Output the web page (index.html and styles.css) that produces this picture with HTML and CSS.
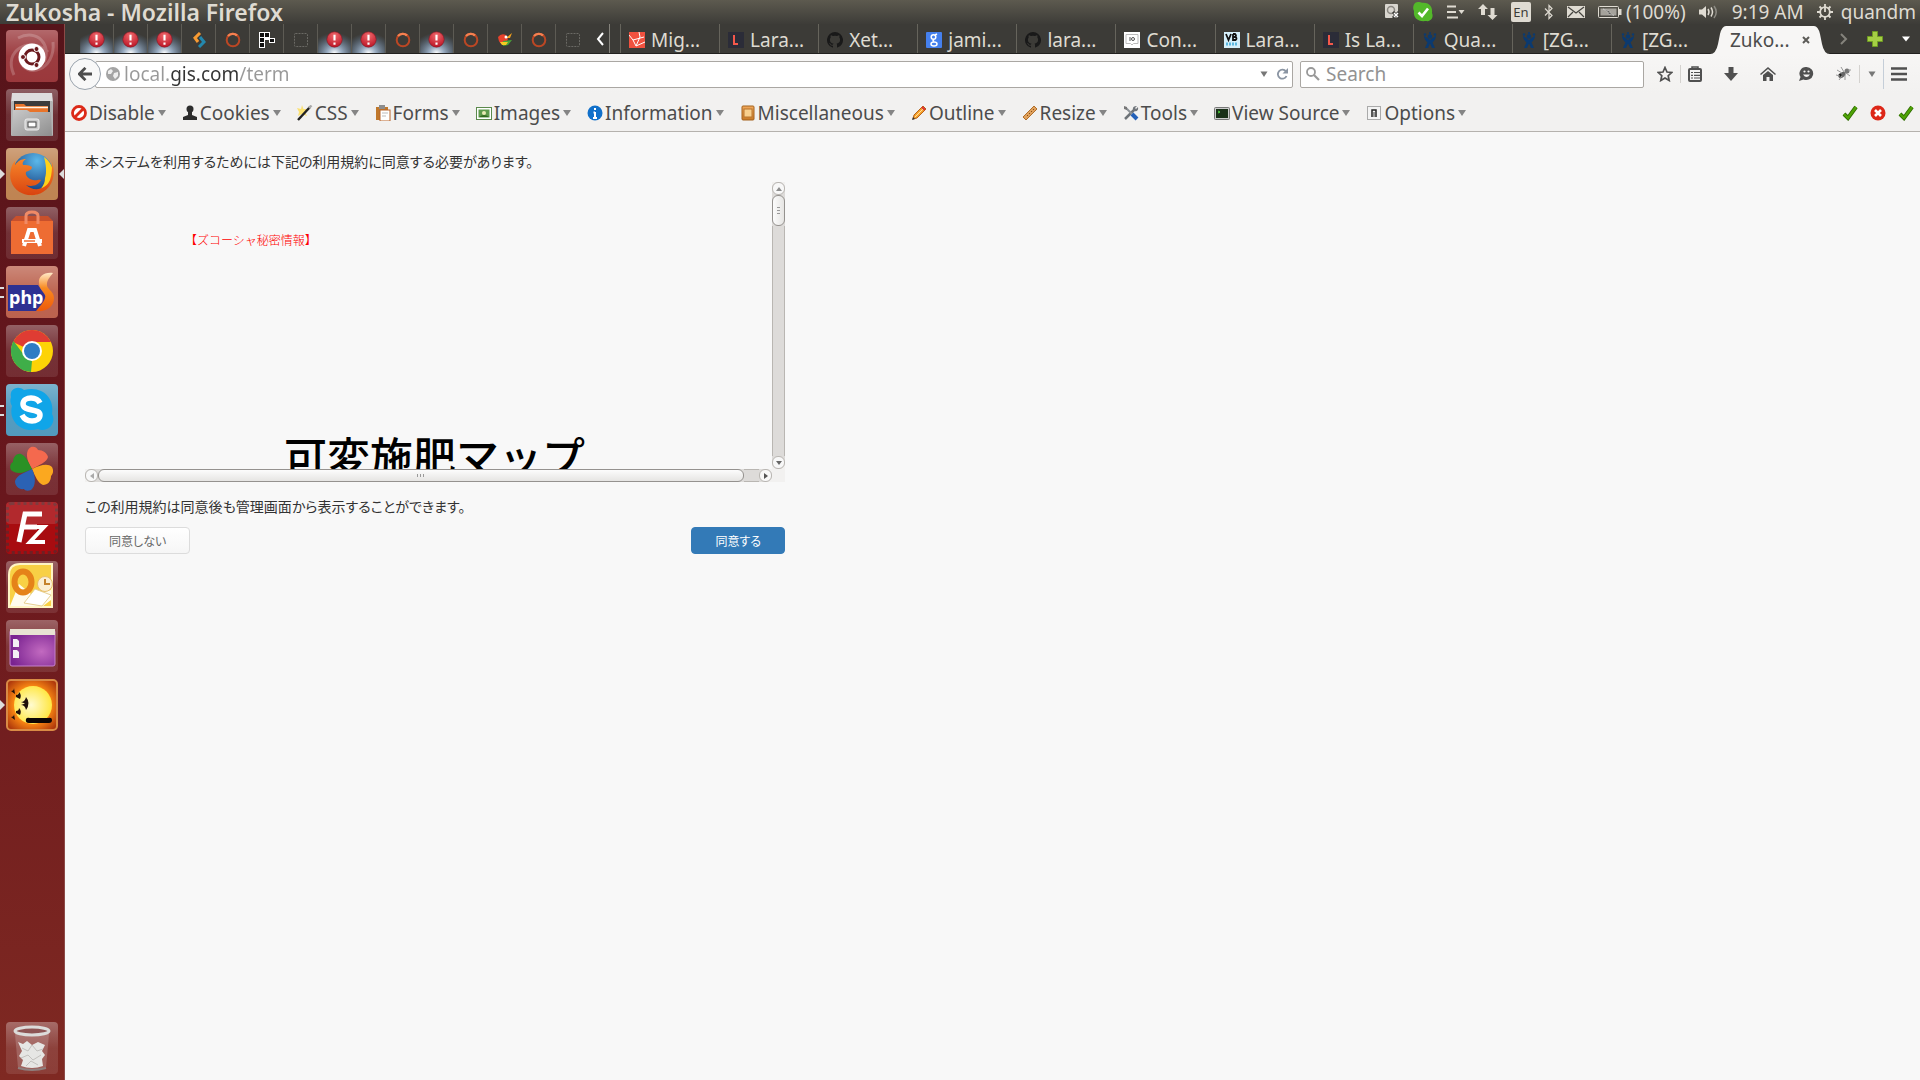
FILE: index.html
```html
<!DOCTYPE html>
<html lang="ja">
<head>
<meta charset="utf-8">
<title>Zukosha</title>
<link rel="stylesheet" href="styles.css">
</head>
<body>
<svg class="defs" aria-hidden="true">
  <defs>
    <linearGradient id="gloss" x1="0" y1="0" x2="0" y2="1"><stop offset="0" stop-color="#fff" stop-opacity=".32"/><stop offset=".5" stop-color="#fff" stop-opacity=".12"/><stop offset="1" stop-color="#fff" stop-opacity=".1"/></linearGradient>
    <radialGradient id="beam" cx=".5" cy="1" r=".75"><stop offset="0" stop-color="#fff"/><stop offset=".3" stop-color="#a9bfd8" stop-opacity=".85"/><stop offset="1" stop-color="#5d7fa8" stop-opacity="0"/></radialGradient>
    <radialGradient id="redball" cx=".5" cy=".25" r=".8"><stop offset="0" stop-color="#f0696c"/><stop offset="1" stop-color="#b80f22"/></radialGradient>
    <linearGradient id="metal" x1="0" y1="0" x2="1" y2="1"><stop offset="0" stop-color="#c9c9c9"/><stop offset="1" stop-color="#8e8e8e"/></linearGradient>
    <linearGradient id="wood" x1="0" y1="0" x2="0" y2="1"><stop offset="0" stop-color="#f1a95d"/><stop offset="1" stop-color="#c97a26"/></linearGradient>
    <linearGradient id="phpS" x1="0" y1="0" x2="0" y2="1"><stop offset="0" stop-color="#ffe9c8"/><stop offset=".4" stop-color="#f98a20"/><stop offset="1" stop-color="#ee5a0a"/></linearGradient>
    <radialGradient id="purple" cx=".7" cy=".6" r=".7"><stop offset="0" stop-color="#c26ac0"/><stop offset="1" stop-color="#7a2391"/></radialGradient>
    <radialGradient id="sun" cx=".45" cy=".5" r=".55"><stop offset="0" stop-color="#fffbd0"/><stop offset="1" stop-color="#ffe640"/></radialGradient>
    <radialGradient id="sunset" cx=".5" cy=".5" r=".7"><stop offset=".5" stop-color="#ff8d14"/><stop offset="1" stop-color="#9c250a"/></radialGradient>
    <radialGradient id="globe" cx=".6" cy=".2" r=".8"><stop offset="0" stop-color="#5bb8ea"/><stop offset="1" stop-color="#143a7c"/></radialGradient>
    <linearGradient id="fox" x1="0" y1="0" x2="0" y2="1"><stop offset="0" stop-color="#f7862a"/><stop offset="1" stop-color="#d9430f"/></linearGradient>
    <symbol id="alert" viewBox="0 0 34 28"><rect width="34" height="28" fill="url(#beam)"/><circle cx="17" cy="14" r="8" fill="url(#redball)" stroke="#7d1620" stroke-width=".6"/><path d="M17 9v6M17 17v2.4" stroke="#fff" stroke-width="2.2"/></symbol>
    <symbol id="ring" viewBox="0 0 16 16"><circle cx="8" cy="8" r="6.3" fill="none" stroke="#bb4724" stroke-width="2"/><path d="M3 4a6.3 6.3 0 0 1 9-.5" fill="none" stroke="#f58151" stroke-width="2.4"/></symbol>
    <symbol id="blank" viewBox="0 0 16 16"><rect x="1.5" y="1.5" width="13" height="13" rx="1" fill="none" stroke="#6b6a65" stroke-dasharray="2 1"/></symbol>
    <symbol id="elle" viewBox="0 0 16 16"><rect width="16" height="16" fill="#2b2c38"/><path d="M6 3v9h4" fill="none" stroke="#f4584b" stroke-width="2"/></symbol>
    <symbol id="octo" viewBox="0 0 16 16"><path fill="#191919" d="M8 0a8 8 0 0 0-2.5 15.600c.4.100.5-.2.500-.4v-1.500c-2.200.500-2.700-.9-2.700-.9-.4-.9-.9-1.200-.9-1.200-.7-.5.100-.5.100-.5.800.100 1.200.8 1.200.8.700 1.200 1.900.9 2.300.7.100-.5.300-.9.500-1.100-1.800-.2-3.600-.9-3.600-4 0-.9.300-1.600.8-2.100-.1-.3-.4-1.100.100-2.200 0 0 .7-.2 2.200.8a7.500 7.500 0 0 1 4 0c1.500-1 2.200-.8 2.200-.8.500 1.100.200 1.900.100 2.200.5.600.8 1.300.8 2.100 0 3.100-1.900 3.800-3.600 4 .3.300.500.800.500 1.500v2.200c0 .2.100.5.500.4A8 8 0 0 0 8 0z"/></symbol>
    <symbol id="jira" viewBox="0 0 16 16"><g fill="#0b3a70"><circle cx="8" cy="4.500" r="2.200"/><circle cx="3" cy="2.500" r="1.200"/><circle cx="13" cy="2.500" r="1.200"/><circle cx="8" cy="1" r="1"/><path d="M2 4l2 1 4 3 4-3 2-1c0 3-2 5-3.500 6.500L13 16h-3L8 11.500 6 16H3l2.500-5.500C4 9 2 7 2 4z"/></g></symbol>
    <symbol id="check" viewBox="0 0 16 16"><path d="M2 9l4 4 8-11" fill="none" stroke="#2f6b00" stroke-width="4"/><path d="M2 9l4 4 8-11" fill="none" stroke="#4fa306" stroke-width="2.400"/></symbol>
  </defs>
</svg>

<header class="panel">
  <h1 class="window-title">Zukosha - Mozilla Firefox</h1>
  <div class="indicators">
    <svg class="i14" viewBox="0 0 14 16"><rect width="13" height="14" rx="1" fill="#d9d6cf"/><circle cx="6" cy="6" r="3.500" fill="none" stroke="#8b8882" stroke-width="1.500"/><path d="M8 8l6 6M14 8l-6 6" stroke="#3c3b37" stroke-width="3"/><path d="M9 9l4 4M13 9l-4 4" stroke="#fff" stroke-width="1.500"/></svg>
    <svg class="i22" viewBox="0 0 22 22"><path d="M6 1c2 0 3 .5 4 .8C17 1 21 6 20 12c2 4-1 9-6 8C6 21 1 17 2 10 0 6 2 1 6 1z" fill="#53b82a"/><path d="M6.500 11.500l3.500 3.500 6-7.500" fill="none" stroke="#fff" stroke-width="2.600"/></svg>
    <svg class="i18" viewBox="0 0 18 16"><path d="M0 2.500h9M0 8h9M0 13.500h11" stroke="#dfdbd2" stroke-width="2.200"/><path d="M11.500 6h6l-3 4z" fill="#dfdbd2"/></svg>
    <svg class="i20" viewBox="0 0 20 16"><path d="M5 0l5 5H7v6H3V5H0zM14.500 16l-5-5h3V4h4v7h3z" fill="#dfdbd2"/></svg>
    <span class="lang">En</span>
    <svg class="i10" viewBox="0 0 10 16"><path d="M1 4.500l7 7L5 14.500v-13l3 3-7 7" fill="none" stroke="#dfdbd2" stroke-width="1.200"/></svg>
    <svg class="i18" viewBox="0 0 18 14"><rect y="1" width="18" height="12" fill="#dfdbd2"/><path d="M1 2l8 6 8-6M1 12l5-5M17 12l-5-5" fill="none" stroke="#45443f" stroke-width="1.200"/></svg>
    <span class="battery"><svg class="i24" viewBox="0 0 24 12"><rect x=".5" y=".5" width="20" height="11" rx="1" fill="none" stroke="#dfdbd2"/><rect x="2.500" y="2.500" width="16" height="7" fill="#a5a29b"/><rect x="21" y="3" width="2.500" height="6" fill="#dfdbd2"/><path d="M5 3l7 2.500-.5 1 4.500 3-6-2 .5-1.200z" fill="#3c3b37" stroke="#eee" stroke-width=".4"/></svg>(100%)</span>
    <svg class="i20" viewBox="0 0 20 16"><path d="M0 5.500h3L7 2v12L3 10.500H0z" fill="#dfdbd2"/><path d="M9 5q2 3 0 6M12 3.500q3 4.500 0 9" fill="none" stroke="#dfdbd2" stroke-width="1.500"/><path d="M15 2q4.500 6 0 12" fill="none" stroke="#8c8a83" stroke-width="1.500"/></svg>
    <time class="clock">9:19 AM</time>
    <span class="user"><svg class="i16" viewBox="0 0 16 16"><circle cx="8" cy="8" r="4.800" fill="none" stroke="#dfdbd2" stroke-width="1.800"/><path d="M8 0v8M8 16v-4M0 8h4M16 8h-4M2.500 2.500L5 5M13.500 2.500L11 5M2.500 13.500L5 11M13.500 13.500L11 11" stroke="#dfdbd2" stroke-width="1.800"/></svg>quandm</span>
  </div>
</header>

<div class="desktop">
  <nav class="launcher" aria-label="Launcher">
    <button class="app" aria-label="Dash"><svg viewBox="0 0 52 52"><rect width="52" height="52" rx="4" fill="#8f2226"/><path d="M8 45C-4 20 25 5 42 22M47 12C50 40 20 50 14 30M12 8c20-10 34 8 26 24" fill="none" stroke="#fff" stroke-opacity=".2" stroke-width="3"/><rect width="52" height="52" rx="4" fill="url(#gloss)"/><circle cx="26" cy="27" r="13.500" fill="#fff"/><circle cx="26" cy="27" r="7" fill="none" stroke="#6a1a1e" stroke-width="3"/><g fill="#6a1a1e" stroke="#fff"><circle cx="17" cy="27" r="2.500"/><circle cx="30.500" cy="19" r="2.500"/><circle cx="30.500" cy="35" r="2.500"/></g></svg></button>
    <button class="app" aria-label="Files"><svg viewBox="0 0 52 52"><rect width="52" height="52" rx="4" fill="url(#gloss)"/><path d="M6 4h40l1 9H5z" fill="#ddd"/><rect x="5" y="12" width="42" height="35" rx="1" fill="#b4b4b4"/><rect x="8" y="12" width="36" height="13" fill="#3b3b3b"/><path d="M9 15h9l2 2h22v8H9z" fill="#e8742a"/><path d="M10 18.500h32" stroke="#fff3e4" stroke-width="1.500"/><path d="M7 21h14l3 2h21l1 24H6z" fill="url(#metal)"/><rect x="19" y="30" width="14" height="11" rx="2" fill="#c9c9c9" stroke="#eee"/><rect x="22" y="33" width="8" height="5" fill="#fff" stroke="#444"/></svg></button>
    <button class="app running focused" aria-label="Firefox"><svg viewBox="0 0 52 52"><rect width="52" height="52" rx="4" fill="#b8763f"/><rect width="52" height="52" rx="4" fill="url(#gloss)"/><circle cx="27" cy="25" r="20" fill="url(#globe)"/><path d="M38 9c9 6 12 18 6 27-5 8-14 12-22 11 12-3 17-9 17-17 2-6 1-14-1-21z" fill="#ffd21a"/><path d="M46 14c4 12 1 24-9 30-12 7-28 2-32-11-2-7 0-16 4-20v4c3-4 6-6 11-6-3 2-4 4-3 6 3 0 6 0 9 2 0 3-4 4-6 5-1 3 2 7 7 8 4 1 6-1 8 0-3 6-10 7-15 5 7 7 20 5 24-5 2-6 2-12 2-18z" fill="url(#fox)"/></svg></button>
    <button class="app" aria-label="Software Center"><svg viewBox="0 0 52 52"><rect width="52" height="52" rx="4" fill="url(#gloss)"/><path d="M5 14l5-5h32l5 5z" fill="#c8502c"/><rect x="5" y="14" width="42" height="33" fill="#ee6c33"/><path d="M20 17V9q0-4 6-4t6 4v8" fill="none" stroke="#f08a66" stroke-width="3"/><path d="M18 39l5-16h6l5 16" fill="none" stroke="#fff" stroke-width="4"/><path d="M16 34h20" stroke="#fff" stroke-width="4"/><path d="M18 34h11" stroke="#ee6c33" stroke-width="1.500"/></svg></button>
    <button class="app windows" aria-label="PhpStorm"><svg viewBox="0 0 52 52"><rect width="52" height="52" rx="4" fill="#b4513b"/><rect width="52" height="52" rx="4" fill="url(#gloss)"/><path d="M2 19h30l9 13-7 13H2z" fill="#2d3192"/><path d="M47 7c-9-1-15 3-14 11 1 7 8 9 6 14-1 4-5 8-9 13 10 1 18-4 18-13 0-7-8-9-7-14 0-4 3-7 6-11z" fill="url(#phpS)"/><text x="3" y="38" class="php-mark">php</text></svg></button>
    <button class="app" aria-label="Chrome"><svg viewBox="0 0 52 52"><rect width="52" height="52" rx="4" fill="url(#gloss)"/><circle cx="26" cy="26" r="21" fill="#fdd306"/><path d="M26 26L7 17A21 21 0 0 1 45 17H26z" fill="#df3c33"/><path d="M26 36l-1 11A21 21 0 0 1 7.500 16L18 30z" fill="#3fae49"/><circle cx="26" cy="26" r="10" fill="#fff"/><circle cx="26" cy="26" r="8" fill="#2f7cc4"/></svg></button>
    <button class="app windows" aria-label="Skype"><svg viewBox="0 0 52 52"><rect width="52" height="52" rx="4" fill="#3f8fb7"/><rect width="52" height="52" rx="4" fill="url(#gloss)"/><path d="M5 13C3 5 12 1 18 6c18-5 31 8 28 24 5 9-4 19-14 15C16 50 2 37 6 22c-2-3-2-6-1-9z" fill="#10a5e8"/><path d="M34 19c-2-4-6-5-9-5-4 0-8 2-8 6 0 8 17 4 17 11 0 4-4 6-8 6-4 0-8-2-10-6" fill="none" stroke="#fff" stroke-width="5.500"/></svg></button>
    <button class="app" aria-label="Clover"><svg viewBox="0 0 52 52"><rect width="52" height="52" rx="4" fill="url(#gloss)"/><path d="M26 26C20 17 19 7 25 4c4-1 6 1 7 3 5 0 9 3 10 7-1 5-9 8-16 12z" fill="#f4694e"/><path d="M26 26C19 30 10 32 5 27c-2-4 0-7 2-8 0-4 3-9 8-8 5 2 8 9 11 15z" fill="#2a9125"/><path d="M26 26c8-4 16-6 20-2 2 4 1 7-1 9 0 5-3 9-8 9-5-2-8-9-11-16z" fill="#fba81f"/><path d="M26 26c4 8 4 17-1 21-3 1-6 1-7-1-5 1-9-3-9-8 2-6 9-8 17-12z" fill="#2b62b4"/></svg></button>
    <button class="app" aria-label="FileZilla"><svg viewBox="0 0 52 52"><rect width="52" height="52" rx="4" fill="#a80c10"/><rect x="1.500" y="1.500" width="49" height="49" rx="4" fill="none" stroke="#6e2024" stroke-width="3" stroke-dasharray="3 3"/><path d="M13 40l6-28h17M16 25h15" fill="none" stroke="#fff" stroke-width="5"/><path d="M24 25h14L24 40h15" fill="none" stroke="#fff" stroke-width="4"/><rect width="52" height="22" rx="4" fill="#fff" opacity=".12"/></svg></button>
    <button class="app" aria-label="Outlook"><svg viewBox="0 0 52 52"><rect width="52" height="52" rx="4" fill="url(#gloss)"/><path d="M3 46V14Q3 3 14 3h32v43z" fill="#f8d045" stroke="#fff4c4" stroke-width="2"/><path d="M4 45l9-22 12 10 20-4v10l-8 6z" fill="#fffbed"/><path d="M18 42l11-14 16 6-9 11z" fill="#fff" stroke="#e6cf90"/><ellipse cx="17" cy="21" rx="8.500" ry="10.500" fill="none" stroke="#e58219" stroke-width="6"/><circle cx="39" cy="23" r="7.500" fill="#fbeed2" stroke="#e9bf6c"/><path d="M39 18v5h5" fill="none" stroke="#c5822b" stroke-width="2"/></svg></button>
    <button class="app" aria-label="Workspace"><svg viewBox="0 0 52 52"><rect width="52" height="52" rx="4" fill="url(#gloss)"/><rect x="4" y="10" width="45" height="36" rx="2" fill="url(#purple)" stroke="#c681cc"/><rect x="4" y="9" width="45" height="6" fill="#e8e3d3"/><path d="M7 19h4l2 2v6H7zM7 30h4l2 2v6H7z" fill="#f3eef4"/></svg></button>
    <button class="app running" aria-label="Sunset"><svg viewBox="0 0 52 52"><rect x="1" y="1" width="50" height="50" rx="4" fill="url(#sunset)" stroke="#d98b45" stroke-width="2"/><circle cx="27" cy="26" r="19" fill="url(#sun)"/><path d="M15 23q4 0 5-5 5 6 0 13-1-5-5-5l4-1.500zM10 16q3 0 3-3 3 3 1 7l-4-2zM10 32q3 0 3-3 3 3 1 7l-4-2zM5 12q3 0 3-3l1 6zM5 38q3 0 3-3l1 6z" fill="#20100a"/><path d="M20 40q1-2 4-1h18q4-1 4 2t-3 3H23q-4 0-3-4z" fill="#0c0605"/></svg></button>
    <button class="app trash" aria-label="Trash"><svg viewBox="0 0 52 52"><rect width="52" height="52" rx="4" fill="url(#gloss)"/><path d="M9 12h34l-3 34q-14 4-28 0z" fill="#fff" opacity=".18"/><path d="M12 20l5 2 4-3 5 4 6-3 7 3-3 6 3 4-3 4 1 7q-11 4-22 0l2-6-4-4 3-5z" fill="#e6e6e4"/><path d="M16 26l6 3 4-6 5 6 6-2M15 36l7-3 5 5 8-5M20 44l5-5 7 4" fill="none" stroke="#c2c0bd"/><path d="M12 46q14 4 28 0" fill="none" stroke="#8f7f7e" stroke-width="2"/><ellipse cx="26" cy="9" rx="17" ry="4" fill="#8e5554" stroke="#dcdcda" stroke-width="3"/></svg></button>
  </nav>

  <section class="browser">
    <div class="tabstrip">
      <div class="pinned">
        <button class="pin wide" aria-label="Alert"><svg><use href="#alert"/></svg></button>
        <button class="pin wide" aria-label="Alert"><svg><use href="#alert"/></svg></button>
        <button class="pin wide" aria-label="Alert"><svg><use href="#alert"/></svg></button>
        <button class="pin" aria-label="Arrows"><svg viewBox="0 0 16 16"><path d="M9 1L4 6l3 4" fill="none" stroke="#f79a32" stroke-width="3"/><path d="M9 5l4 5-5 5" fill="none" stroke="#2488ad" stroke-width="3"/></svg></button>
        <button class="pin" aria-label="Ring"><svg><use href="#ring"/></svg></button>
        <button class="pin" aria-label="Blocks"><svg viewBox="0 0 16 16"><path d="M0 0h11v6h5v5h-6V8H6v8H0z" fill="#fff"/><path d="M1 1h4v4H1zM6 1h4v4H6zM1 6h4v4H1zM1 11h4v4H1zM11 7h4v3h-4z" fill="#111"/></svg></button>
        <button class="pin" aria-label="Blank"><svg><use href="#blank"/></svg></button>
        <button class="pin wide" aria-label="Alert"><svg><use href="#alert"/></svg></button>
        <button class="pin wide" aria-label="Alert"><svg><use href="#alert"/></svg></button>
        <button class="pin" aria-label="Ring"><svg><use href="#ring"/></svg></button>
        <button class="pin wide" aria-label="Alert"><svg><use href="#alert"/></svg></button>
        <button class="pin" aria-label="Ring"><svg><use href="#ring"/></svg></button>
        <button class="pin" aria-label="Bird"><svg viewBox="0 0 16 16"><path d="M1 5q3-4 8-2l2 4-3 6Q2 13 1 5z" fill="#e8422c"/><path d="M6 9l9-1-4 5-5 1z" fill="#4aa53a"/><path d="M3 10h8l-2 3H5z" fill="#f6c924"/><path d="M9 6l6-5-2 5z" fill="#f5a21c"/><circle cx="9" cy="5" r="1.500" fill="#fff"/></svg></button>
        <button class="pin" aria-label="Ring"><svg><use href="#ring"/></svg></button>
        <button class="pin last" aria-label="Blank"><svg><use href="#blank"/></svg></button>
      </div>
      <button class="scroll" aria-label="Scroll tabs left"><svg viewBox="0 0 8 14"><path d="M7 1L2 7l5 6" fill="none" stroke="#fff" stroke-width="2"/></svg></button>
      <div class="tabs">
        <button class="tab"><svg viewBox="0 0 16 16"><rect width="16" height="16" fill="#f0513f"/><path d="M0 3l4 5 11-3M4 8l3 6 9-4M7 14l4-9-1-5" fill="none" stroke="#fff"/></svg>Mig...</button>
        <button class="tab"><svg><use href="#elle"/></svg>Lara...</button>
        <button class="tab"><svg><use href="#octo"/></svg>Xet...</button>
        <button class="tab"><svg viewBox="0 0 16 16"><rect width="16" height="16" rx="1" fill="#4580ee"/><g fill="none" stroke="#fff" stroke-width="1.500"><circle cx="7.500" cy="5" r="2.300"/><ellipse cx="8" cy="12" rx="3" ry="2"/><path d="M9 3l2-1M8 7.500q-2 1 0 2"/></g></svg>jami...</button>
        <button class="tab"><svg><use href="#octo"/></svg>lara...</button>
        <button class="tab"><svg viewBox="0 0 16 16"><rect width="16" height="16" fill="#fff"/><path d="M2 2.500h12v9H9.500L8 13l-1.500-1.500H2z" fill="none" stroke="#bbb"/><path d="M6 5v4" stroke="#555"/><circle cx="9" cy="7" r="1.500" fill="none" stroke="#555"/></svg>Con...</button>
        <button class="tab"><svg viewBox="0 0 16 16"><rect width="16" height="16" fill="#d5effa"/><path d="M2 2l2.500 6L7 2M9 2v6h2.500q2-1.500 0-3H9h2q2-1 0-3H9" fill="none" stroke="#111" stroke-width="1.800"/><path d="M2 12h12" stroke="#5cb8e0" stroke-width="3" stroke-dasharray="2 1"/></svg>Lara...</button>
        <button class="tab"><svg><use href="#elle"/></svg>Is La...</button>
        <button class="tab"><svg><use href="#jira"/></svg>Qua...</button>
        <button class="tab"><svg><use href="#jira"/></svg>[ZG...</button>
        <button class="tab"><svg><use href="#jira"/></svg>[ZG...</button>
      </div>
      <button class="tab-active"><svg class="curve" viewBox="0 0 16 28"><path d="M0 28Q6 28 8 18L10 8Q12 0 16 0V28z" fill="#f7f6f5"/></svg><span class="active-label">Zuko...<svg class="close" viewBox="0 0 8 8"><path d="M1 1l6 6M7 1L1 7" stroke="#5c5b57" stroke-width="2"/></svg></span><svg class="curve" viewBox="0 0 16 28"><path d="M16 28Q10 28 8 18L6 8Q4 0 0 0V28z" fill="#f7f6f5"/></svg></button>
      <div class="tab-tools">
        <button aria-label="Scroll tabs right"><svg class="i8" viewBox="0 0 8 12"><path d="M1 1l5 5-5 5" fill="none" stroke="#85837c" stroke-width="2"/></svg></button>
        <button aria-label="New tab"><svg class="i16" viewBox="0 0 16 16"><path d="M5.500.5h5v5h5v5h-5v5h-5v-5h-5v-5h5z" fill="#a5cf45" stroke="#6f9c22"/></svg></button>
        <button aria-label="List all tabs"><svg class="i8" viewBox="0 0 8 5"><path d="M0 0h8L4 5z" fill="#fff"/></svg></button>
      </div>
    </div>

    <div class="navbar">
      <button class="back" aria-label="Back"><svg viewBox="0 0 16 16"><path d="M8.500 1L1.500 8l7 7M2 8h14" fill="none" stroke="#4d4d4d" stroke-width="3.200"/></svg></button>
      <div class="field url">
        <svg class="i14" viewBox="0 0 14 14"><circle cx="7" cy="7" r="7" fill="#a4a4a4"/><path d="M2 4l3-2 2 2-2 3-3 0zM8 6l4-1v4l-3 3-2-3z" fill="#eee"/></svg>
        <input class="address" type="text" value="local.gis.com/term" aria-label="Address">
        <svg class="i8" viewBox="0 0 8 6"><path d="M.5.500h7L4 6z" fill="#777"/></svg>
        <button aria-label="Reload"><svg class="i12" viewBox="0 0 12 12"><path d="M10 3.500A4.500 4.500 0 1 0 10.500 8" fill="none" stroke="#8b95a3" stroke-width="1.800"/><path d="M12 0v5.500H6.500z" fill="#8b95a3"/></svg></button>
      </div>
      <div class="field search">
        <svg class="i14" viewBox="0 0 14 14"><circle cx="5" cy="5" r="4" fill="none" stroke="#999" stroke-width="1.800"/><path d="M8 8l5 5" stroke="#999" stroke-width="2.200"/></svg>
        <input type="text" placeholder="Search" aria-label="Search">
      </div>
      <div class="nav-tools">
        <button aria-label="Bookmark"><svg class="i16" viewBox="0 0 16 16"><path d="M8 1.500l2 4.500 4.800.5-3.600 3.200 1 4.800L8 12l-4.200 2.500 1-4.800L1.200 6.500 6 6z" fill="none" stroke="#505050" stroke-width="1.700"/></svg></button>
        <i class="rule"></i>
        <div class="shortcuts">
          <button aria-label="Reading list"><svg class="i14" viewBox="0 0 14 16"><rect x="1" y="3" width="12" height="12" rx="1" fill="none" stroke="#505050" stroke-width="2"/><path d="M4 2.500V1h6v1.500" fill="none" stroke="#505050" stroke-width="1.500"/><path d="M3 6.500h2M6 6.500h6M3 9.300h2M6 9.300h6M3 12h2M6 12h6" stroke="#505050" stroke-width="1.200"/></svg></button>
          <button aria-label="Downloads"><svg class="i14" viewBox="0 0 14 14"><path d="M4.500 0h5v6H14l-7 8-7-8h4.500z" fill="#505050"/></svg></button>
          <button aria-label="Home"><svg class="i16" viewBox="0 0 16 16"><path d="M0 8l8-7 8 7-1 1-7-6-7 6zM3 9l5-4 5 4v6h-3.500v-4h-3v4H3z" fill="#505050"/></svg></button>
          <button aria-label="Chat"><svg class="i16" viewBox="0 0 16 16"><path d="M8.500 1a7 6.500 0 1 1-3 12.500L1 15l1.500-4A6.500 6.500 0 0 1 8.500 1z" fill="#505050"/><path d="M5 8.500q3.500 5 7 0z" fill="#f4f3f2"/><circle cx="6.500" cy="5.500" r="1.100" fill="#f4f3f2"/><circle cx="10.500" cy="5.500" r="1.100" fill="#f4f3f2"/></svg></button>
          <button aria-label="Firebug"><svg class="i16" viewBox="0 0 16 16"><ellipse cx="6" cy="9" rx="4" ry="2.500" transform="rotate(-35 6 9)" fill="#666"/><circle cx="11" cy="5" r="2.500" fill="#777"/><circle cx="4" cy="9" r="1.500" fill="#222"/><path d="M1 4l5 3M5 1l3 5M3 14l3-4M9 14l0-5M14 10l-4-3M15 4l-3 0M0 9l4 1" stroke="#999" fill="none"/></svg></button>
        </div>
        <i class="rule"></i>
        <button aria-label="More"><svg class="i8" viewBox="0 0 8 6"><path d="M.5.500h7L4 6z" fill="#777"/></svg></button>
        <i class="rule tall"></i>
        <button aria-label="Menu"><svg class="i16" viewBox="0 0 16 14"><path d="M0 1.500h16M0 7h16M0 12.500h16" stroke="#505050" stroke-width="2.600"/></svg></button>
      </div>
    </div>

    <div class="devbar">
      <button class="dev"><svg viewBox="0 0 16 16"><circle cx="8" cy="8" r="6.500" fill="#fff" stroke="#dc2a18" stroke-width="2.800"/><path d="M3.500 12.500l9-9" stroke="#dc2a18" stroke-width="2.800"/></svg>Disable</button>
      <button class="dev"><svg viewBox="0 0 16 16"><circle cx="8" cy="4" r="3.500" fill="#2c2c2c"/><path d="M6 6h4v4l5 2v3H1v-3l5-2z" fill="#2c2c2c"/></svg>Cookies</button>
      <button class="dev"><svg viewBox="0 0 16 16"><path d="M5 0l1.500 4L11 4 8 7l2 4-5-2-4 2 1-4-2-4 4 1z" fill="#fbe173"/><path d="M1 15L13 2" stroke="#222" stroke-width="2.400"/><path d="M12 3l2.500-2.500" stroke="#aaa" stroke-width="2.400"/></svg>CSS</button>
      <button class="dev"><svg viewBox="0 0 16 16"><rect x="1" y="2" width="12" height="13" fill="#c0782b"/><rect x="5" y="5" width="10" height="11" fill="#fff" stroke="#b8652a"/><rect x="4" width="6" height="4" fill="#8d8d8d"/><path d="M7 8h6M7 11h4" stroke="#bbb"/></svg>Forms</button>
      <button class="dev"><svg viewBox="0 0 16 16"><rect x=".5" y="2.500" width="15" height="12" fill="#fff" stroke="#5c8a4c"/><rect x="2.500" y="4.500" width="11" height="8" fill="#5f9a4c"/><circle cx="8" cy="8" r="2" fill="#e9eab4"/><path d="M3 12q5-4 10 0z" fill="#33691f"/></svg>Images</button>
      <button class="dev"><svg viewBox="0 0 16 16"><circle cx="8" cy="8" r="7.500" fill="#1170ca"/><path d="M8 3v2M8 7v6M6 13h4M6.500 7.500H8" stroke="#fff" stroke-width="2"/></svg>Information</button>
      <button class="dev"><svg viewBox="0 0 16 16"><rect x="2" y="1" width="12" height="14" rx="1" fill="url(#wood)" stroke="#a3621c"/><rect x="4" y="4" width="8" height="8" fill="#f8cf8c" stroke="#b8752c"/></svg>Miscellaneous</button>
      <button class="dev"><svg viewBox="0 0 16 16"><path d="M2 14l1-4 9-9 3 3-9 9z" fill="#f6a12d" stroke="#b5641a"/><path d="M4 12L13 3" stroke="#ffe3a0"/><path d="M11 2l3 3" stroke="#d33" stroke-width="2"/><path d="M1 15l1-3 2 2z" fill="#333"/></svg>Outline</button>
      <button class="dev"><svg viewBox="0 0 16 16"><path d="M1 12L12 1l3 3L4 15z" fill="#e0a15d" stroke="#b06f2b"/><path d="M5 10l1 1M7 8l1 1M9 6l1 1M11 4l1 1" stroke="#8c5012"/></svg>Resize</button>
      <button class="dev"><svg viewBox="0 0 16 16"><path d="M2 14L12 4" stroke="#6e7378" stroke-width="2.500"/><path d="M10 5q-1-4 4-4l-2 2 1 1 2-2q1 5-4 4z" fill="#70757a"/><path d="M3 3l6 6" stroke="#8c9297" stroke-width="2"/><path d="M9 9l5 5" stroke="#2461b8" stroke-width="4"/><path d="M1 1l3 1 0 3-3-1z" fill="#777"/></svg>Tools</button>
      <button class="dev"><svg viewBox="0 0 16 16"><rect x=".5" y="2.500" width="15" height="12" rx="1" fill="#ccc" stroke="#777"/><rect x="2" y="4" width="12" height="9" fill="#193018"/><path d="M4 6l2 1-2 1" stroke="#4fd43c" fill="none"/></svg>View Source</button>
      <button class="dev"><svg viewBox="0 0 16 16"><rect x="1.500" y="1.500" width="13" height="13" fill="#f3f3f3" stroke="#aaa"/><path d="M6 12V5h4v7" fill="none" stroke="#222" stroke-width="1.500"/><rect x="7" y="7" width="2" height="5" fill="#999"/></svg>Options</button>
      <div class="status">
        <svg><use href="#check"/></svg>
        <svg viewBox="0 0 16 16"><circle cx="8" cy="8" r="7.500" fill="#dd2718"/><path d="M5 5l6 6M11 5l-6 6" stroke="#fff" stroke-width="2.600"/></svg>
        <svg><use href="#check"/></svg>
      </div>
    </div>

    <main class="page">
      <div class="terms">
        <p>本システムを利用するためには下記の利用規約に同意する必要があります。</p>
        <div class="frame">
          <article class="doc">
            <p class="secret">【ズコーシャ秘密情報】</p>
            <h2>可変施肥マップ</h2>
          </article>
          <div class="vbar"><i class="step up"></i><i class="thumb"></i><i class="track"></i><i class="step down"></i></div>
          <div class="hbar"><i class="step left"></i><i class="thumb"></i><i class="track"></i><i class="step right"></i></div>
        </div>
        <p>この利用規約は同意後も管理画面から表示することができます。</p>
        <div class="actions">
          <button class="btn">同意しない</button>
          <button class="btn primary">同意する</button>
        </div>
      </div>
    </main>
  </section>
</div>
</body>
</html>
```
FILE: styles.css
```css
* { box-sizing: border-box; }

body {
  margin: 0;
  min-height: 100vh;
  display: flex;
  flex-direction: column;
  background: #f8f8f8;
  color: #4c4c4c;
  font: 19px/24px "Noto Sans", "Noto Sans CJK JP", sans-serif;
}

button, input {
  margin: 0;
  padding: 0;
  border: 0;
  background: none;
  color: inherit;
  font: inherit;
}

button { display: flex; align-items: center; }
svg { display: block; flex: none; }
p, h1, h2 { margin: 0; }

.defs { position: absolute; width: 0; height: 0; }
.i8 { width: 8px; height: 12px; }
.i10 { width: 10px; height: 16px; }
.i12 { width: 12px; height: 12px; }
.i14 { width: 14px; height: 16px; }
.i16 { width: 16px; height: 16px; }
.i18 { width: 18px; height: 16px; }
.i20 { width: 20px; height: 16px; }
.i22 { width: 22px; height: 22px; }
.i24 { width: 24px; height: 12px; }

/* Top panel */
.panel {
  display: flex;
  justify-content: space-between;
  align-items: center;
  height: 24px;
  padding: 0 4px 0 6px;
  background: linear-gradient(#5d5a4f, #3d3c38);
  color: #dfdbd2;
}
.window-title { font-size: 23px; line-height: 24px; font-weight: 600; }
.indicators { display: flex; align-items: center; gap: 13px; }
.battery { display: flex; align-items: center; gap: 4px; }
.user { display: flex; align-items: center; gap: 8px; }
.lang {
  width: 20px;
  border-radius: 2px;
  background: #dfdbd2;
  color: #3c3b37;
  font-size: 13px;
  line-height: 20px;
  text-align: center;
}

.desktop { flex: 1; display: flex; }

/* Launcher */
.launcher {
  flex: none;
  display: flex;
  flex-direction: column;
  gap: 7px;
  width: 65px;
  padding: 6px 0;
  border-right: 1px solid #8c4a47;
  background: linear-gradient(#56141a, #69171d 45%, #7f2922);
}
.app { position: relative; justify-content: center; width: 64px; height: 52px; }
.app svg { width: 52px; height: 52px; }
.app::before, .app::after {
  position: absolute;
  top: 21px;
  border: 5px solid transparent;
}
.running::before { content: ""; left: 0; border-left-color: #ddd; border-right-width: 0; }
.focused::after { content: ""; right: 0; border-right-color: #ddd; border-left-width: 0; }
.windows::before {
  content: "";
  left: 0;
  width: 4px;
  height: 7px;
  border: solid #ddd;
  border-width: 2px 0;
}
.trash { margin-top: auto; }
.php-mark { fill: #fff; font: 700 18px "Noto Sans", sans-serif; }

.browser { flex: 1; min-width: 0; display: flex; flex-direction: column; }

/* Tab strip */
.tabstrip {
  display: flex;
  height: 30px;
  padding-left: 15px;
  border-bottom: 1px solid #22211f;
  background: #3c3b37;
  color: #dfdbd2;
}
.pinned { display: flex; }
.pin {
  justify-content: center;
  width: 34px;
  height: 29px;
  padding-top: 2px;
  border-right: 1px solid #5d5b54;
}
.pin svg { width: 16px; height: 16px; }
.pin.wide svg { width: 33px; height: 27px; }
.last { border: 0; }
.scroll { justify-content: center; width: 20px; border-right: 1px solid #85837c; }
.scroll svg { width: 8px; height: 14px; }
.tabs { flex: 1; min-width: 0; display: flex; padding-left: 10px; }
.tab {
  flex: 1 1 0;
  min-width: 0;
  gap: 6px;
  padding: 2px 0 0 8px;
  border-left: 1px solid #66645c;
  overflow: hidden;
  white-space: nowrap;
}
.tab svg { width: 16px; height: 16px; }
.tab-active { align-self: flex-end; height: 28px; margin-bottom: -1px; color: #4c4c4c; }
.curve { width: 16px; height: 28px; }
.active-label {
  display: flex;
  justify-content: space-between;
  align-items: center;
  width: 88px;
  height: 28px;
  padding: 0 4px;
  background: #f7f6f5;
}
.close { width: 8px; height: 8px; }
.tab-tools { display: flex; gap: 19px; padding: 0 10px; }

/* Navigation bar */
.navbar {
  display: flex;
  align-items: center;
  height: 40px;
  padding: 0 13px 0 4px;
  background: linear-gradient(#f7f6f5, #f2f1f0);
}
.back {
  position: relative;
  z-index: 1;
  flex: none;
  justify-content: center;
  width: 32px;
  height: 32px;
  border: 1px solid #9aa3ad;
  border-radius: 50%;
  background: #f8f8f8;
}
.back svg { width: 14px; height: 14px; }
.field {
  display: flex;
  align-items: center;
  height: 27px;
  border: 1px solid #aaa7a3;
  border-radius: 2px;
  background: #fff;
}
.field input { flex: 1; min-width: 0; outline: 0; }
.url { flex: 1; gap: 8px; margin: 0 7px 0 -6px; padding: 0 4px 0 10px; }
.field .address {
  margin-left: -4px;
  background: linear-gradient(90deg, #999 46px, #333 46px, #333 115px, #999 115px);
  background-clip: text;
  color: transparent;
}
.search { gap: 6px; width: 344px; padding-left: 5px; }
.search input::placeholder { color: #929292; opacity: 1; }
.nav-tools {
  display: flex;
  justify-content: space-between;
  align-items: center;
  width: 250px;
  margin-left: 13px;
}
.shortcuts { display: flex; align-items: center; gap: 22px; }
.rule { width: 1px; height: 18px; background: #d4d2cf; }
.tall { height: 30px; background: #c5ced8; }

/* Developer toolbar */
.devbar {
  display: flex;
  align-items: center;
  gap: 16px;
  height: 38px;
  padding: 0 6px;
  border-bottom: 1px solid #b5b2ae;
  background: #f2f1f0;
}
.dev { gap: 2px; white-space: nowrap; }
.dev svg { width: 16px; height: 16px; }
.dev::after {
  content: "";
  margin-left: 1px;
  border: 4px solid transparent;
  border-top: 6px solid #858585;
  border-bottom: 0;
}
.status { display: flex; gap: 12px; margin-left: auto; }
.status svg { width: 16px; height: 16px; }

/* Page */
.page {
  flex: 1;
  padding: 19px 20px;
  color: #333;
  font: 14px/20px "Noto Sans CJK JP", sans-serif;
}
.terms { width: 700px; }
.terms > p { font-feature-settings: "palt"; }
.frame {
  display: grid;
  grid-template-columns: 1fr 13px;
  grid-template-rows: 1fr 13px;
  height: 300px;
  margin: 11px 0 14px;
  background: #f2f1f0;
}
.doc { overflow: hidden; padding: 48px 88px 0 100px; background: #f8f8f8; }
.doc .secret { color: #f00; font-size: 12px; line-height: 20px; font-weight: 300; }
.doc h2 {
  margin-top: 181px;
  color: #000;
  font-size: 43px;
  line-height: 48px;
  font-weight: 500;
  text-align: center;
  white-space: nowrap;
}
.vbar, .hbar { display: flex; background: #dddbd9; border-radius: 6px; }
.vbar { flex-direction: column; }
.track { flex: 1; border: solid #b9b6b2; border-width: 0 1px; }
.hbar .track { border-width: 1px 0; }
.step {
  display: flex;
  align-items: center;
  justify-content: center;
  width: 13px;
  height: 13px;
  border: 1px solid #b9b6b2;
  border-radius: 6px;
  background: #f8f8f8;
}
.step::before { content: ""; border: 3px solid transparent; }
.up::before { border-top: 0; border-bottom: 4px solid #8d8d8d; }
.down::before { border-bottom: 0; border-top: 4px solid #666; }
.left::before { border-left: 0; border-right: 4px solid #aaa; }
.right::before { border-right: 0; border-left: 4px solid #555; }
.thumb {
  display: flex;
  align-items: center;
  justify-content: center;
  border: 1px solid #95928f;
  border-radius: 6px;
  background: linear-gradient(#fcfcfc, #e6e5e3);
}
.thumb::before { content: ""; }
.vbar .thumb { height: 31px; background: linear-gradient(90deg, #fcfcfc, #e6e5e3); }
.vbar .thumb::before { width: 3px; height: 7px; background: repeating-linear-gradient(#999 0 1px, transparent 1px 3px); }
.hbar .thumb { flex: 0 0 94%; }
.hbar .thumb::before { width: 7px; height: 3px; background: repeating-linear-gradient(90deg, #999 0 1px, transparent 1px 3px); }
.actions { display: flex; justify-content: space-between; margin-top: 11px; }
.btn {
  height: 27px;
  padding: 0 23px;
  border: 1px solid #dcdcdc;
  border-radius: 4px;
  background: linear-gradient(#fff, #f6f6f6);
  color: #666;
  font-size: 12px;
  line-height: 20px;
  font-feature-settings: "palt";
}
.primary { border-color: #337ab7; background: #337ab7; color: #fff; }
```
